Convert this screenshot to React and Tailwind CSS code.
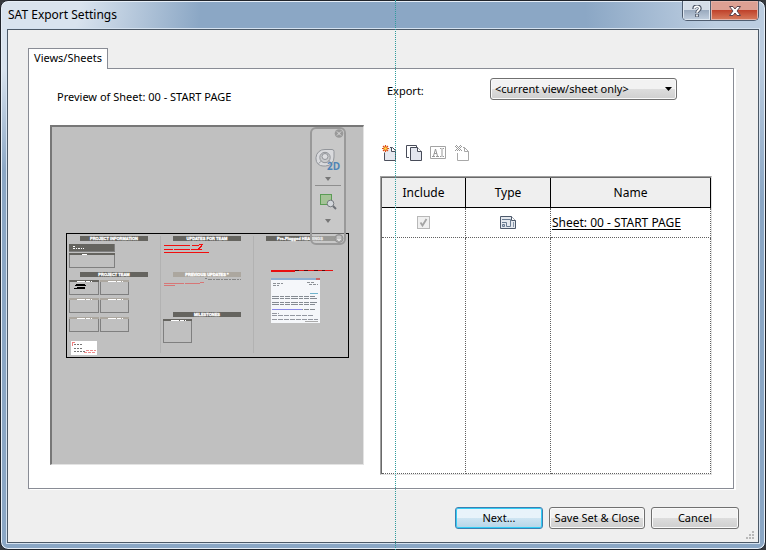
import React from "react";

const DARK = "#65645f";
const TAN = "#aca79f";
const LINE = "#7f7f7f";

function Bar({ x, width = 68, y, fill = DARK, children }) {
  return (
    <g>
      <rect x={x} y={y} width={width} height="5" fill={fill} />
      <text
        x={x + 34}
        y={y + 4}
        fontSize="4"
        fontWeight="700"
        textAnchor="middle"
        fill="#fff"
        stroke="#fff"
        strokeWidth="0.300"
      >
        {children}
      </text>
    </g>
  );
}

function Box({ x, y, w, h, top = TAN, dash = "8 1 4 1 3 40" }) {
  return (
    <g>
      <rect x={x + 0.5} y={y + 0.5} width={w - 1} height={h - 1} fill="none" stroke={LINE} />
      <rect x={x} y={y} width={w} height="2" fill={top} />
      <path d={`M${x + Math.round(w * 0.28)} ${y + 1.5}h${Math.round(w * 0.5)}`} stroke="#fff" strokeDasharray={dash} />
    </g>
  );
}

function SheetDrawing() {
  const lines = [298, 300, 304, 306, 311];
  return (
    <svg
      className="block h-[337px] w-full font-['Liberation_Sans',sans-serif]"
      viewBox="52 127 311 337"
      role="img"
      aria-label="Sheet preview"
      shapeRendering="crispEdges"
    >
      <rect x="66.5" y="233.5" width="282" height="124" fill="none" stroke="#000" />
      <path d="M160.5 236v117M253.5 236v117" stroke="#b2b2b2" />

      <Bar x={80} y={236}>PROJECT INFORMATION</Bar>
      <rect x="69" y="244" width="46" height="8" fill={LINE} />
      <rect x="69" y="244" width="45" height="7" fill={DARK} />
      <path d="M73 246.500h3M73 248.500h11" stroke="#fff" strokeDasharray="2 1 1 1" />
      <Box x={69} y={253} w={46} h={15} top={DARK} dash="5 40" />

      <Bar x={80} y={272}>PROJECT TEAM</Bar>
      <Box x={69} y={280} w={30} h={15} top={DARK} />
      <path d="M76 284.500h9M75 285.500h11M77 287.500h8M74 288.500h11" stroke="#000" />
      <Box x={100} y={280} w={29} h={15} />
      <Box x={69} y={298} w={30} h={15} />
      <Box x={100} y={298} w={29} h={15} />
      <Box x={69} y={317} w={30} h={15} />
      <Box x={100} y={317} w={29} h={15} />

      <rect x="71" y="341" width="26" height="14" fill="#fff" />
      <path d="M72.500 346v-4h2" fill="none" stroke="#f08080" />
      <path d="M74 344.500h9M74 348.500h8M74 351.500h11" stroke="#777" strokeDasharray="2 1" />
      <path d="M86 350.500h10M84 352.500h12" stroke="#ef8d8d" strokeDasharray="3 1" />

      <Bar x={173} y={236}>UPDATES FOR TEAM</Bar>
      <path
        d="M164 245.500h26M192 245.500h7M199 244.500h4M164 249.500h9M174 249.500h16M191 249.500h11M164 252.500h45M201 245.500h1M200 246.500h2M199 247.500h2M198 248.500h2"
        stroke="#f20d0d"
      />
      <Bar x={173} y={272} fill={TAN}>PREVIOUS UPDATES *</Bar>
      <path d="M205 278.500h2M208 279.500h33" stroke="#858585" strokeDasharray="4 1 2 1" />
      <path d="M164 283.500h20M185 283.500h15M200 282.500h4M164 285.500h11" stroke="#d77676" />
      <Bar x={173} y={312}>MILESTONES</Bar>
      <Box x={163} y={319} w={29} h={24} top={DARK} />

      <Bar x={266} y={236} width={72}>Pre-Plugged HEADINGS</Bar>
      <path d="M271 270.500h62" stroke="#5a0808" />
      <path d="M271 270.500h24M299 270.500h5M308 270.500h6M318 270.500h4M325 270.500h8M271 271.500h24" stroke="#e80f0f" />

      <rect x="271" y="278" width="49" height="45" fill="#f5f7fa" />
      <rect x="271" y="278" width="49" height="2" fill="#8eafd0" />
      <rect x="316" y="278" width="4" height="2" fill="#ca6665" />
      <path d="M273 283.500h10M273 285.500h6M307 282.500h8M309 284.500h9" stroke="#8d9297" strokeDasharray="3 1" />
      <path d="M310 293.500h8" stroke="#71b4cd" />
      {lines.map((y) => (
        <path key={y} d={`M272 ${y - 1.5}h${y % 4 ? 43 : 46}`} stroke="#858b92" strokeDasharray="7 1 4 1 5 1" />
      ))}
      <path d="M272 309.500h30" stroke="#8988e8" />
      <path d="M272 313.500h7M272 315.500h42M272 319.500h46" stroke="#9397a0" strokeDasharray="5 1" />
      <path d="M305 321.500h13" stroke="#aaa" />
    </svg>
  );
}

function DownMark() {
  return (
    <svg className="h-1 w-[6px]" viewBox="0 0 6 4">
      <path d="M0 0h6L3 4z" fill="#777" />
    </svg>
  );
}

function NavigationBar() {
  return (
    <div className="absolute top-0 right-[17px] flex h-[118px] w-9 flex-col items-center rounded-md border-2 border-[#999] bg-[#d0d0d0]/50">
      <button className="self-end" aria-label="Close navigation bar">
        <svg className="h-[9px] w-[10px]" viewBox="0 0 10 9">
          <circle cx="5" cy="4.500" r="4.300" fill="#999" />
          <path d="M3 2.500l4 4M7 2.500l-4 4" stroke="#ddd" />
        </svg>
      </button>
      <button className="mt-2" aria-label="2D steering wheel">
        <svg className="h-[26px] w-[26px]" viewBox="0 0 26 26">
          <path
            d="M10 3.500h7q2 0 2 2V11a8.500 8.500 0 0 1-8.500 9H8A7 7 0 0 1 1 13v-1.500A8.500 8.500 0 0 1 10 3.500z"
            fill="#d9dadd"
            stroke="#92959a"
          />
          <circle cx="10" cy="11.500" r="5.200" fill="#c9cacc" stroke="#92959a" />
          <circle cx="10" cy="10.500" r="3" fill="#dcdde0" stroke="#92959a" />
          <path d="M3.500 17.500l3-2.500M16.500 17l-3-2.500" stroke="#9a9da1" />
          <text x="12" y="24" fontSize="10" fontWeight="700" fill="#4e83b6" className="font-['Open_Sans',sans-serif]">2D</text>
        </svg>
      </button>
      <button className="mt-[3px] flex h-2 items-center" aria-label="Wheel options"><DownMark /></button>
      <div className="mt-[2px] w-[26px] border-t border-[#8e8e8e]" />
      <button className="mt-[7px]" aria-label="Zoom in region">
        <svg className="h-[18px] w-[18px]" viewBox="0 0 18 18">
          <rect x="1.500" y="1.500" width="11" height="10" fill="#a5c397" stroke="#5b9c55" />
          <circle cx="11.500" cy="10.500" r="3.300" fill="#d3d7dc" stroke="#767a80" />
          <path d="M14 13l3 3" stroke="#6d7176" strokeWidth="2" />
        </svg>
      </button>
      <button className="mt-[6px] flex h-2 items-center" aria-label="Zoom options"><DownMark /></button>
      <button className="mt-auto self-end" aria-label="Customize">
        <svg className="h-[9px] w-[10px]" viewBox="0 0 10 9">
          <circle cx="5" cy="4.500" r="4" fill="#aaa" stroke="#909090" />
          <path d="M3 3h4M3 5h4L5 7z" stroke="#ddd" fill="#ddd" />
        </svg>
      </button>
    </div>
  );
}

function NewIcon() {
  return (
    <svg className="h-4 w-4" viewBox="0 0 16 16">
      <path d="M2.500 7.500v8h11V5.500L10.500 2.500H8" fill="#e6e8ef" stroke="#4b4f5c" />
      <path d="M9.500 2.500v4h4" fill="#fff" stroke="#4b4f5c" />
      <path d="M3.500 0v7M0 3.500h7M1 1l5 5M6 1L1 6" stroke="#dc4b13" strokeWidth="1.200" />
      <circle cx="3.500" cy="3.500" r="1.600" fill="#ffe24d" stroke="#ed7b1c" strokeWidth="0.700" />
    </svg>
  );
}

function CopyIcon() {
  return (
    <svg className="h-4 w-4" viewBox="0 0 16 16">
      <path d="M3 12.500H.500V.500h10V2" fill="none" stroke="#474b58" />
      <path d="M4.500 2.500h7l4 4v9h-11z" fill="#e3e6ef" stroke="#474b58" />
      <path d="M11.500 2.500v4h4" fill="#fff" stroke="#474b58" />
    </svg>
  );
}

function RenameIcon() {
  return (
    <svg className="h-4 w-4" viewBox="0 0 16 16">
      <path d="M.500 1.500h15v12H.500z" fill="none" stroke="#a3a3a3" />
      <path
        d="M2 11.500h3M6 11.500h3M3.500 11l2-7 2 7M4 8.500h3M10 3.500h1.500M12.500 3.500H14M12 4v7M10 11.500h1.500M12.500 11.500H14"
        fill="none"
        stroke="#999"
      />
    </svg>
  );
}

function DeleteIcon() {
  return (
    <svg className="h-4 w-4" viewBox="0 0 16 16">
      <path d="M3.500 8v7.500h11V6.500l-4-4H9" fill="none" stroke="#a8a8a8" />
      <path d="M10.500 2.500v4h4" fill="none" stroke="#a8a8a8" />
      <path
        d="M2 .500h1M6 .500h1M3 1.500h1M5 1.500h1M2 2.500h1M4 2.500h1M6 2.500h1M3 3.500h1M5 3.500h1M2 4.500h1M4 4.500h1M6 4.500h1M3 5.500h1M5 5.500h1M1 1.500h1M7 1.500h1M1 5.500h1M7 5.500h1"
        stroke="#999"
      />
    </svg>
  );
}

function SheetIcon() {
  return (
    <svg className="mx-auto block h-[13px] w-4" viewBox="0 0 16 13" role="img" aria-label="Sheet">
      <path d="M.500 .500h11l4 4v8H.500z" fill="#e5e9ef" stroke="#4d596b" />
      <path d="M11.500 .500v4h4" fill="#fff" stroke="#4d596b" />
      <path d="M2 3.500h8.500v7h-4v-4H2" fill="none" stroke="#697b91" />
      <path d="M2.500 8.500h2v2h-2z" fill="#b9c5d4" stroke="#697b91" />
      <path d="M13.500 6v5" stroke="#8796a8" />
    </svg>
  );
}

const TOOLS = [
  { label: "New set", Icon: NewIcon },
  { label: "Duplicate set", Icon: CopyIcon },
  { label: "Rename set", Icon: RenameIcon, disabled: true },
  { label: "Delete set", Icon: DeleteIcon, disabled: true },
];

const plainButton =
  "h-[22px] rounded-[3px] border border-[#707070] bg-linear-to-b from-[#f2f2f2] from-50% via-[#dddddd] via-50% to-[#cfcfcf] shadow-[inset_0_0_0_1px_#fafafa]";

function TitleBar() {
  return (
    <header className="flex h-7 items-start justify-between">
      <h1 className="pt-[5px] pl-px text-xs leading-[18px] font-normal">SAT Export Settings</h1>
      <div className="flex h-5 overflow-hidden rounded-b-[5px] border border-t-0 border-[#4f5d70]">
        <button
          className="flex w-7 items-center justify-center border-r border-[#4f5d70] bg-linear-to-b from-[#d5dde7] from-45% via-[#97a7bb] via-45% to-[#c2cfdf] shadow-[inset_0_0_0_1px_#dfe7f0]"
          aria-label="Help"
        >
          <svg className="h-3 w-3" viewBox="0 0 12 12">
            <path d="M3 4c0-4 6-4 6-.500C9 5.500 6 5.500 6 8" fill="none" stroke="#4c5566" strokeWidth="3.500" />
            <path d="M4.200 9h3.600v3H4.200z" fill="#4c5566" />
            <path d="M3.300 3.800c.2-3.300 5.400-3.200 5.400-.3C8.700 5.500 6 5.500 6 7.800M6 9.500v2" fill="none" stroke="#fff" strokeWidth="1.700" />
          </svg>
        </button>
        <button
          className="flex w-[47px] items-center justify-center bg-linear-to-b from-[#dda093] from-45% via-[#bd3c26] via-45% to-[#d77b5d] shadow-[inset_0_0_0_1px_#e3b2a8]"
          aria-label="Close"
        >
          <svg className="h-[10px] w-3" viewBox="0 0 12 10">
            <path d="M.500 .500h3.500l2 2.500 2-2.500h3.500L8 5l3.500 4.500H8L6 7 4 9.500H.500L4 5z" fill="#fff" stroke="#59404a" />
          </svg>
        </button>
      </div>
    </header>
  );
}

function SetTable() {
  return (
    <div className="mt-[15px] border border-[#e3e3e3] border-t-[#a0a0a0] border-l-[#a0a0a0]">
      <div className="border border-r-0 border-b-0 border-[#696969]">
        <table className="w-full table-fixed border-separate border-spacing-0 text-xs">
          <colgroup>
            <col className="w-[84px]" />
            <col className="w-[85px]" />
            <col />
          </colgroup>
          <thead>
            <tr className="h-[30px] bg-[#efefef]">
              <th className="border-r border-b border-black p-0 font-normal">Include</th>
              <th className="border-r border-b border-black p-0 font-normal">Type</th>
              <th className="border-r border-b border-black p-0 font-normal">Name</th>
            </tr>
          </thead>
          <tbody>
            <tr className="h-[30px]">
              <td className="border-r border-b border-dotted border-[#606060] p-0">
                <span className="relative mx-auto block h-[13px] w-[13px]">
                  <input
                    type="checkbox"
                    checked
                    disabled
                    readOnly
                    aria-label="Include Sheet: 00 - START PAGE"
                    className="block h-[13px] w-[13px] appearance-none border border-[#b8b8b8] bg-[#f0f0f0]"
                  />
                  <svg className="absolute inset-0" viewBox="0 0 13 13">
                    <path d="M3.500 6.500l2 3 4-6.500" fill="none" stroke="#a4a4a4" strokeWidth="1.800" />
                  </svg>
                </span>
              </td>
              <td className="border-r border-b border-dotted border-[#606060] p-0"><SheetIcon /></td>
              <td className="border-r border-b border-dotted border-[#606060] p-0 pl-px whitespace-nowrap underline underline-offset-2">
                Sheet: 00 - START PAGE
              </td>
            </tr>
            <tr className="h-[236px]">
              <td className="border-r border-b border-dotted border-[#606060]" />
              <td className="border-r border-b border-dotted border-[#606060]" />
              <td className="border-r border-b border-dotted border-[#606060]" />
            </tr>
          </tbody>
        </table>
      </div>
    </div>
  );
}

export default function App() {
  return (
    <div className="relative min-h-screen bg-[#35383d] font-['Noto_Sans','Open_Sans',sans-serif] text-black">
      <div className="flex min-h-screen flex-col rounded-lg border border-[#20242b] bg-[#8ba7c5] bg-[radial-gradient(200px_170px_at_0_0,#d9e3ee_40%,transparent),radial-gradient(180px_200px_at_100%_0,#bccde0_30%,transparent)] px-[6px] pb-[6px] shadow-[inset_0_0_0_1px_#e6eef7]">
        <TitleBar />
        <main className="flex grow flex-col border border-[#4c5967] bg-[#efefef] pt-[18px] pr-[19px] pl-5 text-[11px] shadow-[0_0_0_1px_#d5e2f0]">
          <div role="tablist" className="flex">
            <button
              role="tab"
              aria-selected="true"
              className="relative z-10 -mb-px h-[21px] w-20 border border-b-0 border-[#898c95] bg-white pb-px"
            >
              Views/Sheets
            </button>
          </div>
          <section
            role="tabpanel"
            className="mr-[5px] grid grid-cols-[314fr_332fr] items-start gap-4 border border-[#898c95] bg-white pr-[21px] pb-[13px] pl-[21px] shadow-[2px_1px_0_#fff]"
          >
            <div>
              <h2 className="flex h-14 items-center pl-[7px]">Preview of Sheet: 00 - START PAGE</h2>
              <div className="relative border border-t-2 border-l-2 border-[#e3e3e3] border-t-[#777] border-l-[#777] bg-[#c0c0c0]">
                <SheetDrawing />
                <NavigationBar />
              </div>
            </div>
            <div className="pt-[9px]">
              <div className="flex h-[21px] pl-[7px]">
                <label htmlFor="export" className="w-[103px] pt-[5px]">Export:</label>
                <div className="relative">
                  <select id="export" className={`${plainButton} block w-[187px] appearance-none pl-1`}>
                    <option>&lt;current view/sheet only&gt;</option>
                  </select>
                  <svg className="pointer-events-none absolute top-[9px] right-[5px] h-1 w-[7px]" viewBox="0 0 7 4">
                    <path d="M0 0h7L3.500 4z" fill="#000" />
                  </svg>
                </div>
              </div>
              <div role="toolbar" className="mt-[46px] flex gap-2 pl-[2px]">
                {TOOLS.map(({ label, Icon, disabled }) => (
                  <button key={label} aria-label={label} disabled={disabled}>
                    <Icon />
                  </button>
                ))}
              </div>
              <SetTable />
            </div>
          </section>
          <footer className="flex justify-end gap-[6px] pt-[18px]">
            <button className="h-[22px] w-[88px] rounded-[3px] border border-[#3c7fb1] bg-linear-to-b from-[#e8f3fa] from-50% via-[#cfe5f2] via-50% to-[#b5d5e8] shadow-[inset_0_0_0_1px_#33cdf5]">
              Next...
            </button>
            <button className={`${plainButton} w-24`}>Save Set &amp; Close</button>
            <button className={`${plainButton} w-[88px]`}>Cancel</button>
          </footer>
          <svg className="mt-auto -mr-4 mb-[2px] h-[9px] w-[9px] self-end" viewBox="0 0 9 9">
            <path d="M6 0h2v2H6zM3 3h2v2H3zM6 3h2v2H6zM0 6h2v2H0zM3 6h2v2H3zM6 6h2v2H6z" fill="#b8b8b8" />
          </svg>
        </main>
      </div>
      <div className="pointer-events-none absolute inset-y-0 left-[395px] border-l border-dotted border-[#2f9c9c]" />
    </div>
  );
}
